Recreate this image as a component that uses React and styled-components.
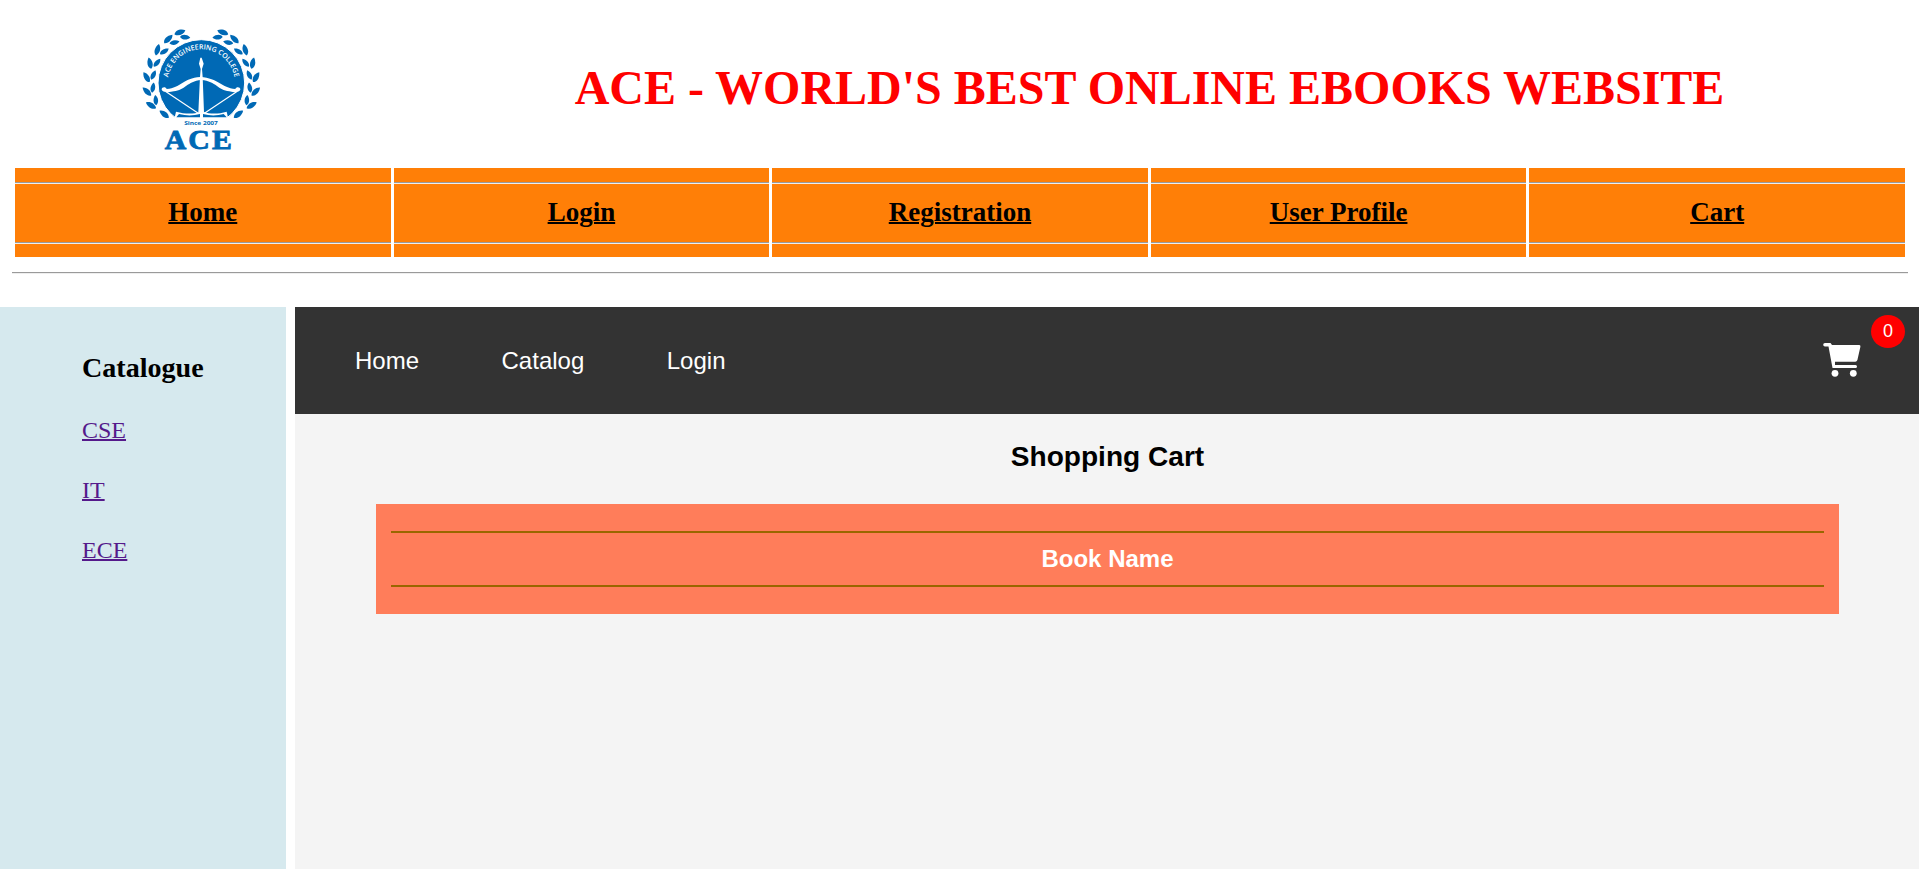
import React from "react";
import styled, { createGlobalStyle } from "styled-components";

const GlobalStyle = createGlobalStyle`
  * { box-sizing: border-box; }
  body {
    margin: 0;
    background: #fff;
    color: #000;
    font-family: "Liberation Serif", "Times New Roman", serif;
    overflow: hidden;
  }
`;

const Page = styled.div`
  display: flex;
  flex-direction: column;
  height: 869px;
`;

const Header = styled.header`
  display: flex;
  height: 168px;
  padding: 15px 15px 0 130px;
`;

const Logo = styled.svg`
  width: 145px;
  height: 145px;
  flex: none;
`;

const Title = styled.h1`
  flex: 1;
  margin: 0;
  padding: 45px 0 0 120px;
  font-size: 48px;
  line-height: 56px;
  text-align: center;
  color: #ff0000;
`;

const MainNav = styled.nav`
  display: grid;
  grid-template-columns: repeat(5, 1fr);
  gap: 3px;
  height: 89px;
  margin: 0 14px 0 15px;
`;

const NavCell = styled.div`
  display: flex;
  flex-direction: column;
  justify-content: space-between;
  padding: 14px 0 13px;
  background: #ff7f07;
`;

const Groove = styled.div`
  height: 2px;
  border-top: 1px solid #9a9a9a;
  border-bottom: 1px solid #eeeeee;
`;

const NavLink = styled.a`
  align-self: center;
  padding-bottom: 2px;
  font-size: 27px;
  font-weight: bold;
  line-height: 30px;
  color: #000;
  text-decoration: underline;
  text-decoration-thickness: 2px;
`;

const Divider = styled(Groove)`
  flex: none;
  margin: 15px 11px 33px 12px;
`;

const Body = styled.div`
  display: flex;
  flex: 1;
  gap: 9px;
`;

const Sidebar = styled.aside`
  display: flex;
  flex-direction: column;
  align-items: flex-start;
  width: 286px;
  padding: 45px 0 0 82px;
  background: #d6e9ee;
`;

const SideTitle = styled.h3`
  margin: 0 0 32px;
  font-size: 28.08px;
  line-height: 32px;
`;

const SideLink = styled.a`
  margin-bottom: 32px;
  font-size: 24px;
  line-height: 28px;
  color: #551a8b;
  text-decoration: underline;
  text-decoration-thickness: 2px;
`;

const Content = styled.main`
  flex: 1;
  background: #f4f4f4;
  font-family: "Liberation Sans", Arial, sans-serif;
`;

const ShopBar = styled.div`
  position: relative;
  display: flex;
  align-items: flex-start;
  gap: 82.5px;
  height: 107px;
  padding: 40px 58px 0 60px;
  background: #333;
  color: #fff;
`;

const ShopLink = styled.a`
  font-size: 24px;
  line-height: 28px;
`;

const CartIcon = styled.svg`
  width: 38px;
  height: 34px;
  margin: -4px 0 0 auto;
`;

const Badge = styled.span`
  position: absolute;
  top: 8px;
  right: 14px;
  width: 34px;
  height: 33px;
  border-radius: 50%;
  background: #ff0000;
  font-size: 18px;
  line-height: 32px;
  text-align: center;
`;

const CartTitle = styled.h2`
  margin: 27px 0 31px;
  padding-left: 1px;
  font-size: 28.08px;
  line-height: 32px;
  text-align: center;
`;

const CartCard = styled.section`
  height: 110px;
  margin: 0 80px 0 81px;
  padding: 27px 15px;
  background: #ff7d5a;
`;

const CartHeading = styled.div`
  height: 56px;
  padding-top: 12px;
  border-top: 2px solid #996600;
  border-bottom: 2px solid #996600;
  font-size: 24px;
  font-weight: bold;
  line-height: 28px;
  text-align: center;
  color: #fff;
`;

const BLUE = "#0069b5";

// Each pair of leaves on the left branch: degrees above the horizontal,
// then the tilt of the outer and of the inner leaf.
const leafPairs = [
  [68, -86, -62],
  [54, -96, -64],
  [38, -110, -68],
  [22, -122, -70],
  [7, -126, -70],
  [-8, -126, -70],
  [-23, -124, -70],
];
const LEAF = "M-17 1C-12-9 4-11 18-1C9 10-8 11-17 1Z";

const Wreath = () => (
  <>
    {leafPairs.map(([deg, outer, inner]) => (
      <g key={deg} transform={`translate(214 204) rotate(${deg})`}>
        <path d={LEAF} transform={`translate(-165 3) rotate(${outer})`} />
        <path d={LEAF} transform={`translate(-146 -6) rotate(${inner}) scale(0.88)`} />
      </g>
    ))}
    <path d={LEAF} transform="translate(103 298) rotate(-140)" />
  </>
);

const AceLogo = () => (
  <Logo viewBox="0 0 435 435" role="img" aria-label="ACE Engineering College">
    <defs>
      <path id="arc" d="M113 204A101 101 0 0 1 315 204" />
      <clipPath id="disc">
        <rect x="0" y="0" width="435" height="308" />
      </clipPath>
    </defs>
    <g fill={BLUE}>
      <Wreath />
      <g transform="translate(428 0) scale(-1 1)">
        <Wreath />
      </g>
      <circle cx="214" cy="204" r="130" stroke="#fff" strokeWidth="3" clipPath="url(#disc)" />
    </g>
    <text
      fill="#fff"
      fontFamily="Open Sans, sans-serif"
      fontSize="21"
      fontWeight="600"
      textAnchor="middle"
    >
      <textPath href="#arc" startOffset="50%">
        ACE ENGINEERING COLLEGE
      </textPath>
    </text>
    <path d="M211 128h4l6 18-5 16 2 24 4 106h-17l5-106 2-24-5-16z" fill="#fff" />
    <path
      d="M95 223C95 215 108 215 110 222C154 219 158 189 211 186C266 189 274 219 316 222C318 215 331 215 331 223C331 233 307 233 298 229C263 226 260 199 214 195C170 199 166 226 131 229C119 233 95 233 95 223Z"
      fill="#fff"
    />
    <path d="M106 229L207 296M322 229L221 296" fill="none" stroke="#fff" strokeWidth="3.5" />
    <path d="M138 290C168 298 193 297 210 290H219C242 298 265 297 290 290L297 320H131Z" fill="#fff" />
    <path d="M147 297C170 303 191 302 210 297V307H139ZM219 297C240 303 263 302 281 297L290 307H219Z" fill={BLUE} />
    <text
      x="213"
      y="330"
      fill={BLUE}
      fontFamily="Open Sans, sans-serif"
      fontSize="18"
      fontWeight="700"
      textAnchor="middle"
      textLength="101"
      lengthAdjust="spacingAndGlyphs"
    >
      Since 2007
    </text>
    <text
      x="208"
      y="401"
      fill={BLUE}
      stroke={BLUE}
      strokeWidth="2.5"
      fontFamily="Liberation Serif, serif"
      fontSize="82"
      fontWeight="700"
      letterSpacing="6"
      textAnchor="middle"
      textLength="208"
      lengthAdjust="spacingAndGlyphs"
    >
      ACE
    </text>
  </Logo>
);

const pages = ["Home", "Login", "Registration", "User Profile", "Cart"];
const subjects = ["CSE", "IT", "ECE"];
const shopLinks = ["Home", "Catalog", "Login"];

export default function App() {
  return (
    <Page>
      <GlobalStyle />
      <Header>
        <AceLogo />
        <Title>ACE - WORLD'S BEST ONLINE EBOOKS WEBSITE</Title>
      </Header>
      <MainNav>
        {pages.map((name) => (
          <NavCell key={name}>
            <Groove />
            <NavLink>{name}</NavLink>
            <Groove />
          </NavCell>
        ))}
      </MainNav>
      <Divider />
      <Body>
        <Sidebar>
          <SideTitle>Catalogue</SideTitle>
          {subjects.map((name) => (
            <SideLink key={name}>{name}</SideLink>
          ))}
        </Sidebar>
        <Content>
          <ShopBar>
            {shopLinks.map((name) => (
              <ShopLink key={name}>{name}</ShopLink>
            ))}
            <CartIcon viewBox="0 0 38 34" fill="#fff" aria-label="Cart">
              <path d="M2 0H7.5L9 2H36.3Q37.7 2.2 37.4 3.8L34.4 17Q33.8 18.8 32.3 18.8H12V22H32.5Q34 22 34 23.5Q34 25 32.5 25H9.5L5.5 3.6H2Q.2 3.6.2 1.8Q.2 0 2 0Z" />
              <circle cx="12" cy="30.3" r="3.4" />
              <circle cx="30.3" cy="30.3" r="3.4" />
            </CartIcon>
            <Badge>0</Badge>
          </ShopBar>
          <CartTitle>Shopping Cart</CartTitle>
          <CartCard>
            <CartHeading>Book Name</CartHeading>
          </CartCard>
        </Content>
      </Body>
    </Page>
  );
}
